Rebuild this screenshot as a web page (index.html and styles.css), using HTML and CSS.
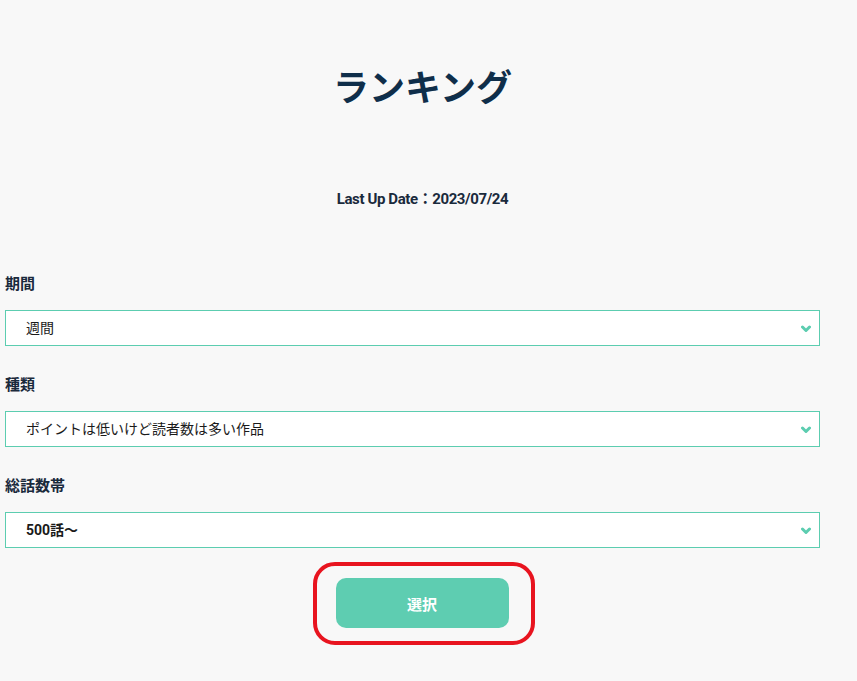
FILE: index.html
```html
<!DOCTYPE html>
<html lang="ja">
<head>
<meta charset="utf-8">
<title>ランキング</title>
<link rel="stylesheet" href="styles.css">
</head>
<body>
<main class="page">
  <h1 class="title">ランキング</h1>
  <p class="date">Last Up Date：2023/07/24</p>

  <div class="field field-first">
    <div class="label">期間</div>
    <div class="select"><span class="value">週間</span>
      <svg class="chev" width="10" height="8" viewBox="0 0 10 8"><polyline points="1.5,2 5,5.5 8.5,2" fill="none" stroke="#5ccdb0" stroke-width="3" stroke-linecap="round" stroke-linejoin="round"/></svg>
    </div>
  </div>

  <div class="field">
    <div class="label">種類</div>
    <div class="select"><span class="value">ポイントは低いけど読者数は多い作品</span>
      <svg class="chev" width="10" height="8" viewBox="0 0 10 8"><polyline points="1.5,2 5,5.5 8.5,2" fill="none" stroke="#5ccdb0" stroke-width="3" stroke-linecap="round" stroke-linejoin="round"/></svg>
    </div>
  </div>

  <div class="field">
    <div class="label">総話数帯</div>
    <div class="select"><span class="value bold">500話〜</span>
      <svg class="chev" width="10" height="8" viewBox="0 0 10 8"><polyline points="1.5,2 5,5.5 8.5,2" fill="none" stroke="#5ccdb0" stroke-width="3" stroke-linecap="round" stroke-linejoin="round"/></svg>
    </div>
  </div>

  <div class="actions">
    <div class="highlight">
      <button class="btn" type="button">選択</button>
    </div>
  </div>
</main>
</body>
</html>
```

FILE: styles.css
```css
html, body {
  margin: 0;
  padding: 0;
  background: #f8f8f8;
}
body {
  font-family: Roboto, "Noto Sans CJK JP", sans-serif;
  color: #0f2a44;
}
.page {
  width: 835px;
  padding-left: 5px;
}
.title {
  margin: 63px 0 0;
  font-family: "Noto Sans CJK JP", sans-serif;
  font-size: 36px;
  line-height: 44px;
  font-weight: 700;
  text-align: center;
  color: #0f2e4a;
  letter-spacing: 0;
}
.date {
  margin: 82px 0 0;
  font-size: 15px;
  line-height: 20px;
  font-weight: 700;
  text-align: center;
  color: #1a2a3c;
  letter-spacing: -0.4px;
}
.field {
  margin-top: 29px;
  width: 815px;
}
.field-first {
  margin-top: 65px;
}
.label {
  font-family: Roboto, "Noto Sans CJK JP", sans-serif;
  font-size: 15px;
  line-height: 20px;
  font-weight: 700;
  color: #1a2a3c;
  margin-bottom: 16px;
}
.select {
  box-sizing: border-box;
  height: 36px;
  border: 1px solid #5ccdb0;
  background: #fff;
  display: flex;
  align-items: center;
  justify-content: space-between;
  padding: 0 8px 2px 20px;
}
.value {
  font-family: Roboto, "Noto Sans CJK JP", sans-serif;
  font-size: 14px;
  color: #1a1a1a;
}
.value.bold {
  font-weight: 700;
}
.chev {
  display: block;
  margin-top: 4px;
}
.actions {
  width: 835px;
  display: flex;
  justify-content: center;
  margin-top: 14px;
}
.highlight {
  box-sizing: border-box;
  width: 222px;
  height: 83px;
  border: 4px solid #e8141f;
  border-radius: 22px;
  padding: 12px 0 0 19px;
  margin-left: 2px;
}
.btn {
  width: 173px;
  height: 50px;
  border: none;
  border-radius: 10px;
  background: #5ecdb1;
  color: #fff;
  font-family: "Noto Sans CJK JP", sans-serif;
  font-size: 15px;
  font-weight: 700;
  cursor: pointer;
}
```
